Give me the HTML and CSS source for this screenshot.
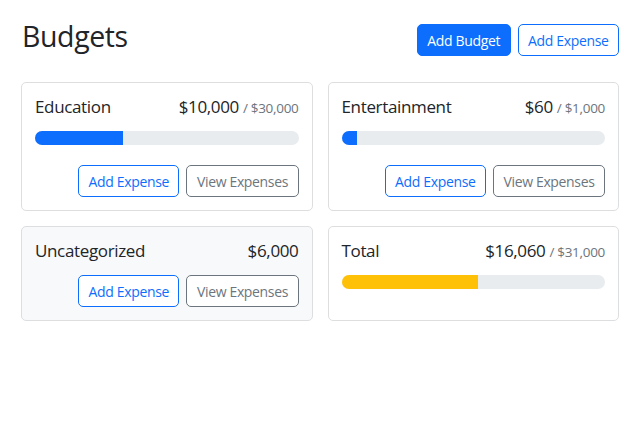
FILE: index.html
```html
<!DOCTYPE html>
<html lang="en">
<head>
<meta charset="utf-8">
<title>Budgets</title>
<link rel="stylesheet" href="styles.css">
</head>
<body>
<div class="page">
  <header class="header">
    <h1 class="title">Budgets</h1>
    <div class="actions">
      <button class="btn btn-primary">Add Budget</button>
      <button class="btn btn-outline-primary">Add Expense</button>
    </div>
  </header>
  <div class="grid">
    <div class="card">
      <div class="card-row">
        <div class="card-name">Education</div>
        <div class="amount">$10,000<span class="max">/ $30,000</span></div>
      </div>
      <div class="progress"><div class="bar bar-primary" style="width:33.3%"></div></div>
      <div class="card-actions">
        <button class="btn btn-outline-primary">Add Expense</button>
        <button class="btn btn-outline-secondary">View Expenses</button>
      </div>
    </div>
    <div class="card">
      <div class="card-row">
        <div class="card-name">Entertainment</div>
        <div class="amount">$60<span class="max">/ $1,000</span></div>
      </div>
      <div class="progress"><div class="bar bar-primary" style="width:6%"></div></div>
      <div class="card-actions">
        <button class="btn btn-outline-primary">Add Expense</button>
        <button class="btn btn-outline-secondary">View Expenses</button>
      </div>
    </div>
    <div class="card card-light">
      <div class="card-row">
        <div class="card-name">Uncategorized</div>
        <div class="amount">$6,000</div>
      </div>
      <div class="card-actions">
        <button class="btn btn-outline-primary">Add Expense</button>
        <button class="btn btn-outline-secondary">View Expenses</button>
      </div>
    </div>
    <div class="card">
      <div class="card-row">
        <div class="card-name">Total</div>
        <div class="amount">$16,060<span class="max">/ $31,000</span></div>
      </div>
      <div class="progress"><div class="bar bar-warning" style="width:51.8%"></div></div>
    </div>
  </div>
</div>
</body>
</html>
```
FILE: styles.css
```css
* { box-sizing: border-box; }
body {
  margin: 0;
  background: #fff;
  color: #212529;
  font-family: "Segoe UI", "Open Sans", "Noto Sans", sans-serif;
}
.page {
  margin-left: 21px;
  width: 598px;
  padding-top: 18px;
}
.header {
  display: flex;
  justify-content: space-between;
  align-items: flex-start;
}
.title {
  margin: 0 0 0 1px;
  font-size: 28.5px;
  font-weight: 400;
  letter-spacing: -0.4px;
  line-height: 36px;
}
.actions {
  display: flex;
  gap: 7px;
  margin-top: 6px;
}
.btn {
  height: 32px;
  padding: 0 9.5px;
  font-family: inherit;
  font-size: 14px;
  letter-spacing: -0.35px;
  border: 1px solid;
  border-radius: 5px;
  background: #fff;
  cursor: pointer;
}
.btn-primary { background: #0d6efd; border-color: #0d6efd; color: #fff; }
.btn-outline-primary { border-color: #0d6efd; color: #0d6efd; }
.btn-outline-secondary { border-color: #6c757d; color: #6c757d; }
.grid {
  margin-top: 26px;
  display: grid;
  grid-template-columns: 1fr 1fr;
  gap: 15px;
}
.card {
  border: 1px solid #dcdee0;
  border-radius: 5px;
  padding: 13px;
  background: #fff;
}
.card-light { background: #f8f9fa; }
.card-row {
  display: flex;
  justify-content: space-between;
  align-items: baseline;
  line-height: 21px;
}
.card-name { font-size: 17px; letter-spacing: -0.35px; }
.amount { font-size: 17px; letter-spacing: -0.35px; }
.max {
  font-size: 13.5px;
  letter-spacing: -0.3px;
  color: #6c757d;
  margin-left: 4px;
}
.progress {
  margin-top: 12px;
  height: 14px;
  background: #e9ecef;
  border-radius: 7px;
  overflow: hidden;
}
.bar { height: 100%; }
.bar-primary { background: #0d6efd; }
.bar-warning { background: #ffc107; }
.card-actions {
  display: flex;
  justify-content: flex-end;
  gap: 7px;
  margin-top: 20px;
}
.card-light .card-actions { margin-top: 14px; }
```
